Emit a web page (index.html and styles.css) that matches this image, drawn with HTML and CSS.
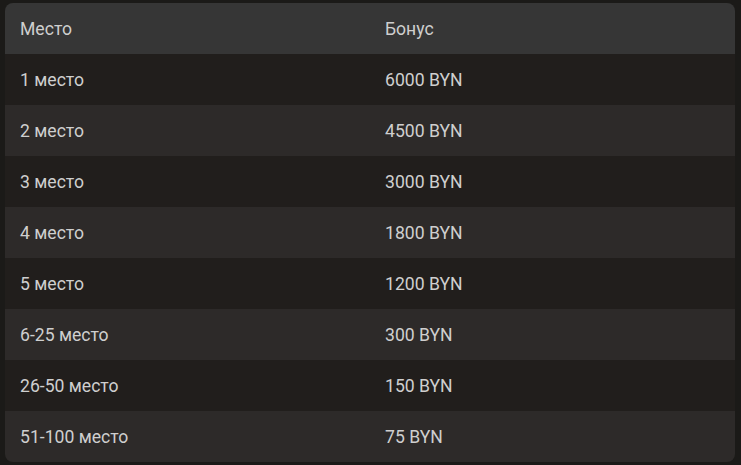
FILE: index.html
```html
<!DOCTYPE html>
<html lang="ru">
<head>
<meta charset="utf-8">
<link rel="stylesheet" href="styles.css">
</head>
<body>
<div class="wrap">
<table class="prizes">
<thead><tr><th>Место</th><th>Бонус</th></tr></thead>
<tbody>
<tr><td>1 место</td><td>6000 BYN</td></tr>
<tr><td>2 место</td><td>4500 BYN</td></tr>
<tr><td>3 место</td><td>3000 BYN</td></tr>
<tr><td>4 место</td><td>1800 BYN</td></tr>
<tr><td>5 место</td><td>1200 BYN</td></tr>
<tr><td>6-25 место</td><td>300 BYN</td></tr>
<tr><td>26-50 место</td><td>150 BYN</td></tr>
<tr><td>51-100 место</td><td>75 BYN</td></tr>
</tbody>
</table>
</div>
</body>
</html>
```
FILE: styles.css
```css
html, body {
  margin: 0;
  padding: 0;
  background: #1b1a18;
  height: 100%;
}
.wrap {
  padding: 3px 6px 3px 5px;
}
.prizes {
  width: 100%;
  border-collapse: separate;
  border-spacing: 0;
  border-radius: 8px;
  overflow: hidden;
  font-family: Roboto, "Liberation Sans", sans-serif;
  font-size: 17.6px;
  color: #cfcfcf;
  table-layout: fixed;
}
.prizes th, .prizes td {
  text-align: left;
  font-weight: 400;
  padding: 0 15px;
  height: 51px;
  box-sizing: border-box;
}
.prizes th {
  background: #363636;
}
.prizes tbody tr:nth-child(odd) td {
  background: #211e1c;
}
.prizes tbody tr:nth-child(even) td {
  background: #2d2a29;
}
```
